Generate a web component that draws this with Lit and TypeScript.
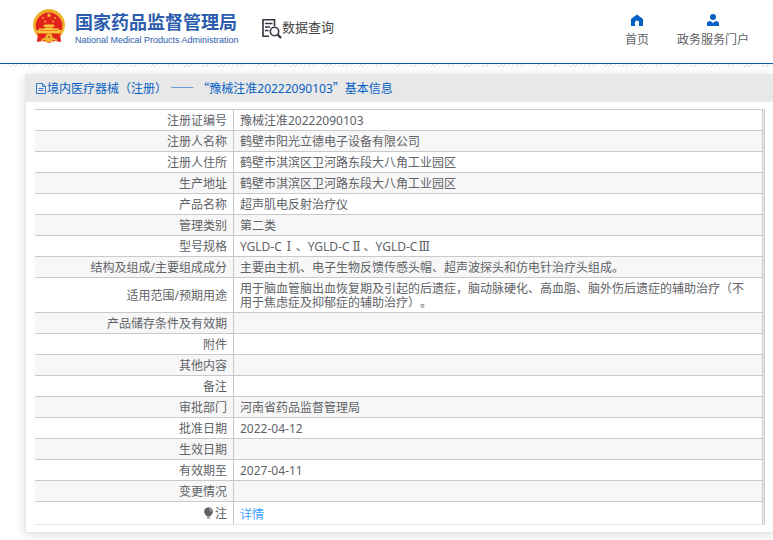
import { LitElement, html, css, svg } from "lit";
import { customElement } from "lit/decorators.js";

type Row = { label: string; value: string };

const rows: Row[] = [
  { label: "注册证编号", value: "豫械注准20222090103" },
  { label: "注册人名称", value: "鹤壁市阳光立德电子设备有限公司" },
  { label: "注册人住所", value: "鹤壁市淇滨区卫河路东段大八角工业园区" },
  { label: "生产地址", value: "鹤壁市淇滨区卫河路东段大八角工业园区" },
  { label: "产品名称", value: "超声肌电反射治疗仪" },
  { label: "管理类别", value: "第二类" },
  { label: "型号规格", value: "YGLD-CⅠ、YGLD-CⅡ、YGLD-CⅢ" },
  { label: "结构及组成/主要组成成分", value: "主要由主机、电子生物反馈传感头帽、超声波探头和仿电针治疗头组成。" },
  {
    label: "适用范围/预期用途",
    value: "用于脑血管脑出血恢复期及引起的后遗症，脑动脉硬化、高血脂、脑外伤后遗症的辅助治疗（不用于焦虑症及抑郁症的辅助治疗）。",
  },
  { label: "产品储存条件及有效期", value: "" },
  { label: "附件", value: "" },
  { label: "其他内容", value: "" },
  { label: "备注", value: "" },
  { label: "审批部门", value: "河南省药品监督管理局" },
  { label: "批准日期", value: "2022-04-12" },
  { label: "生效日期", value: "" },
  { label: "有效期至", value: "2027-04-11" },
  { label: "变更情况", value: "" },
];

const withNumerals = (text: string) =>
  text.split(/([ⅠⅡⅢ])/).map((part) => (/^[ⅠⅡⅢ]$/.test(part) ? html`<span class="numeral">${part}</span>` : part));

const star = (x: number, y: number, r: number) => {
  const pts = Array.from({ length: 10 }, (_, i) => {
    const a = (Math.PI / 5) * i - Math.PI / 2;
    const d = i % 2 ? r * 0.42 : r;
    return `${(x + d * Math.cos(a)).toFixed(2)},${(y + d * Math.sin(a)).toFixed(2)}`;
  }).join(" ");
  return svg`<polygon points=${pts} fill="#f9c83c" />`;
};

@customElement("site-header")
export class SiteHeader extends LitElement {
  static styles = css`
    :host {
      display: flex;
      justify-content: space-between;
      height: 63px;
      background: #fff;
      border-bottom: 1px solid #0b5cab;
    }
    .left,
    .brand,
    .query,
    nav {
      display: flex;
    }
    a {
      color: inherit;
      text-decoration: none;
    }
    .brand {
      margin: 8px 0 0 32px;
      color: #2b5cad;
    }
    .names {
      width: 162px;
      margin-left: 9px;
      white-space: nowrap;
    }
    .cn {
      display: block;
      font: 700 18px/24px "Noto Sans CJK SC", sans-serif;
      margin-top: 1px;
    }
    .en {
      display: block;
      font: 9px/14px "Liberation Sans", sans-serif;
    }
    .query {
      margin: 17px 0 0 25px;
      font: 13px/20px "Noto Sans CJK SC", sans-serif;
      color: #444;
      white-space: nowrap;
    }
    nav {
      gap: 28px;
      margin: 14px 24px 0 0;
    }
    .item {
      display: flex;
      flex-direction: column;
      align-items: center;
      font: 12px/18px "Noto Sans", "Noto Sans CJK SC", sans-serif;
      color: #606266;
      white-space: nowrap;
    }
    .item svg {
      margin-bottom: 5px;
    }
  `;

  render() {
    return html`
      <div class="left">
        <a class="brand" href="#">
          <svg width="34" height="36" viewBox="0 0 34 36" aria-hidden="true">
            <path d="M6 25L5 34L11 33L17 35L23 33L29 34L28 25Z" fill="#d8231c" />
            <circle cx="17" cy="17" r="16" fill="#f2b632" />
            <circle cx="17" cy="17" r="14" fill="none" stroke="#dd8f22" stroke-width="0.8" stroke-dasharray="1.500 1" />
            <path d="M4.500 22A13.200 13.200 0 1 1 29.500 22Z" fill="#e2231a" />
            ${star(17, 7.5, 2.6)} ${star(11, 10, 1.4)} ${star(23, 10, 1.4)} ${star(13, 13.5, 1.4)} ${star(21, 13.5, 1.4)}
            <path d="M11 18.500L12.500 16.500H21.500L23 18.500H21V20.500H27L27.500 25H6.500L7 20.500H13V18.500Z" fill="#f9c83c" />
            <path d="M13 19.300H21M8 22.500H26" stroke="#df5a20" stroke-width="0.7" />
            <path d="M5 25.500H29L27 30Q22 32 17 29.500Q12 32 7 30Z" fill="#e2231a" />
            <circle cx="17" cy="29" r="3.4" fill="#f2b632" />
            <circle cx="17" cy="29" r="1.3" fill="#dd6a22" />
            <path d="M9 32.500Q12 32 13.500 29.500M25 32.500Q22 32 20.500 29.500M13 33.500H21" stroke="#f2b632" stroke-width="1.6" fill="none" />
          </svg>
          <span class="names">
            <span class="cn">国家药品监督管理局</span>
            <span class="en">National Medical Products Administration</span>
          </span>
        </a>
        <a class="query" href="#">
          <svg width="20" height="22" viewBox="0 0 20 22" fill="none" stroke="#33343f" stroke-width="1.6" aria-hidden="true">
            <path d="M7 19.200H1V2.800H12.500V9" />
            <path d="M3 6.500H10.500M3 10H8M3 13.500H6.500" stroke-width="1.3" />
            <circle cx="12.500" cy="14.500" r="4.2" />
            <path d="M15.500 17.500L19 21" stroke-width="2.4" />
          </svg>
          <span>数据查询</span>
        </a>
      </div>
      <nav>
        <a class="item" href="#">
          <svg width="12" height="12" viewBox="0 0 12 12" fill="#0560c4" aria-hidden="true">
            <path d="M6 0.500L12 5V12H8V8.500A2 2 0 0 0 4 8.500V12H0V5Z" />
          </svg>
          <span>首页</span>
        </a>
        <a class="item" href="#">
          <svg width="12" height="12" viewBox="0 0 12 12" fill="#0560c4" aria-hidden="true">
            <circle cx="6" cy="3" r="3" />
            <path d="M0 12V9.500Q0 7 3.500 7L6 9L8.500 7Q12 7 12 9.500V12Z" />
          </svg>
          <span>政务服务门户</span>
        </a>
      </nav>
    `;
  }
}

@customElement("app-root")
export class AppRoot extends LitElement {
  static styles = css`
    :host {
      display: block;
      overflow: hidden;
      background: #fff;
      color: #606266;
      font: 12px/14px "Noto Sans", "Noto Sans CJK SC", sans-serif;
      text-spacing-trim: space-all;
    }
    .hatch {
      height: 3px;
      background: repeating-linear-gradient(135deg, #e6e6e6 0 1px, #fff 1px 3px);
    }
    .card {
      margin: 7px 0 16px 25px;
      padding-bottom: 7px;
      border: 1px solid #e6e6ec;
      border-width: 0 0 1px 1px;
      box-shadow: 0 2px 10px rgba(0, 0, 0, 0.14);
    }
    h1 {
      display: flex;
      align-items: center;
      height: 25px;
      margin: 0 0 7px;
      padding: 2px 0 0 10px;
      background: #e8e8e8;
      border-bottom: 1px solid #ebebf5;
      color: #0560c4;
      font-size: 12px;
      font-weight: 400;
      white-space: pre;
    }
    .cjk {
      font-family: "Noto Sans CJK SC", sans-serif;
    }
    .numeral {
      display: inline-block;
      min-width: 14px;
      text-align: center;
      font-family: "Liberation Serif", "DejaVu Serif", serif;
    }
    .frame {
      margin: 0 8px 0 9px;
      border-right: 1px solid #c9c9d2;
      padding-right: 1px;
      background: #ebebf5;
    }
    table {
      width: 100%;
      border-collapse: separate;
      border-spacing: 0;
      background: #fff;
      border-right: 1px solid #c9c9cb;
      border-bottom: 1px solid #e6e9f5;
    }
    th,
    td {
      height: 18px;
      box-sizing: content-box;
      padding: 2px 6px 0;
      border-top: 1px solid #c9c9cb;
      font-weight: 400;
      vertical-align: middle;
    }
    th {
      width: 186px;
      text-align: right;
      border-right: 1px solid #c9c9cb;
    }
    td {
      padding-right: 12px;
      text-align: left;
    }
    .long td {
      height: 32px;
    }
    tr:nth-child(even) {
      background: #f7f7f7;
    }
    .note th {
      height: 20px;
    }
    .note td {
      height: 18px;
      padding-top: 4px;
    }
    .note svg {
      vertical-align: -1px;
    }
    .note a {
      color: #409eff;
      text-decoration: none;
    }
  `;

  render() {
    return html`
      <site-header lang="zh-CN"></site-header>
      <div class="hatch"></div>
      <main class="card" lang="zh-CN">
        <h1><svg width="11" height="11" viewBox="0 0 11 11" fill="none" stroke="#0560c4" aria-hidden="true"><path d="M0.500 0.500H6.500L9.500 3.500V10.500H0.500ZM6.500 0.500V3.500H9.500M2.500 5.500H7.500M2.500 7.500H7.500" stroke-width="0.8" /></svg><span>境内医疗器械（注册） <span class="cjk">——</span> <span class="cjk">“</span>豫械注准20222090103<span class="cjk">”</span>基本信息</span></h1>
        <div class="frame">
          <table>
            <tbody>
              ${rows.map(
                (r) => html`<tr class=${r.value.length > 50 ? "long" : ""}>
                  <th scope="row">${r.label}</th>
                  <td>${withNumerals(r.value)}</td>
                </tr>`
              )}
              <tr class="note">
                <th scope="row"><svg width="12" height="12" viewBox="0 0 12 12" aria-hidden="true"><path d="M5.500 0.200A4.400 4.400 0 0 1 8.500 7.800L7 9.500H4L2.500 7.800A4.400 4.400 0 0 1 5.500 0.200Z" fill="#606266" /><path d="M4 10.900H7" stroke="#606266" /><path d="M6 1.700Q8.200 2.200 8.300 4.500" stroke="#ddd" fill="none" stroke-width="0.8" /></svg>注</th>
                <td><a href="#">详情</a></td>
              </tr>
            </tbody>
          </table>
        </div>
      </main>
    `;
  }
}
